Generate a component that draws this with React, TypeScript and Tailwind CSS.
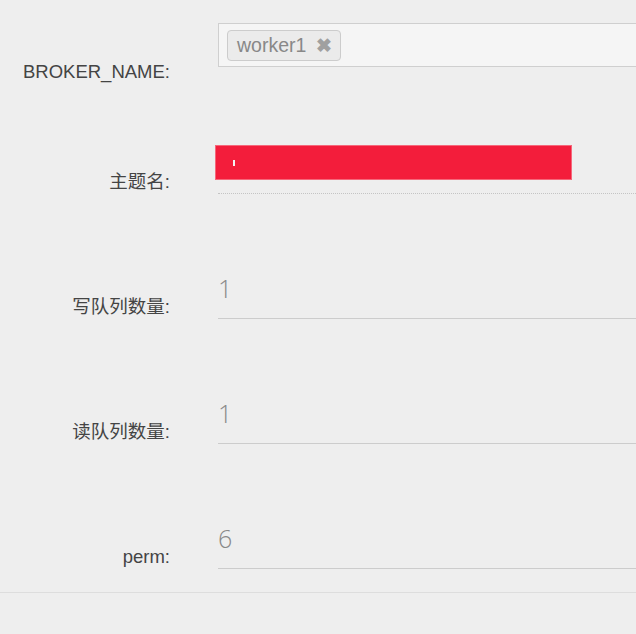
import React from 'react';

const labelCls =
    "w-[170px] shrink-0 text-right text-[18.5px] leading-[20px] text-[#444] font-['Liberation_Sans','Noto_Sans_CJK_SC',sans-serif]";

function ValueRow({ label, value }: { label: string; value: string }) {
    return (
        <div className="flex items-end h-[125px]">
            <div className={`${labelCls} mb-[2px]`}>{label}:</div>
            <div className="ml-[48px] w-[460px] shrink-0 flex items-end h-[48px] border-b border-[#cccccc] pb-[17px]">
                <span className="text-[25px] leading-[25px] font-light text-[#888] font-['Open_Sans',sans-serif]">{value}</span>
            </div>
        </div>
    );
}

export default function App() {
    return (
        <div className="w-[636px] h-[634px] bg-[#eeeeee] overflow-hidden">
            {/* BROKER_NAME */}
            <div className="flex items-end h-[87px]">
                <div className={`${labelCls} mb-[5px]`}>BROKER_NAME:</div>
                <div className="ml-[48px] w-[460px] shrink-0 mb-[20px] h-[44px] border border-[#cfcfcf] bg-[#f5f5f5] pl-[8px] pt-[6px]">
                    <span className="inline-flex items-center h-[31px] pl-[9px] pr-[8px] gap-[10px] rounded-[4px] border border-[#cccccc] bg-[#ebebeb] text-[19.5px] text-[#888] font-['Liberation_Sans',sans-serif]">
                        worker1
                        <span className="text-[19px] font-bold text-[#a0a0a0] leading-none">✖</span>
                    </span>
                </div>
            </div>

            {/* 主题名 */}
            <div className="flex items-end h-[107px]">
                <div className={`${labelCls} mb-[2px]`}>主题名:</div>
                <div className="ml-[48px] w-[460px] shrink-0 h-[49px] border-b border-dotted border-[#c4c4c4]">
                    <div className="-ml-[3px] w-[357px] h-[35px] bg-[#f31d3b] border border-[#f5677a] flex items-center pl-[17px]">
                        <div className="w-[2px] h-[6px] bg-[#f3f3f3]" />
                    </div>
                </div>
            </div>

            <ValueRow label="写队列数量" value="1" />
            <ValueRow label="读队列数量" value="1" />
            <ValueRow label="perm" value="6" />

            <div className="mt-[23px] border-t border-[#dddddd]" />
        </div>
    );
}
